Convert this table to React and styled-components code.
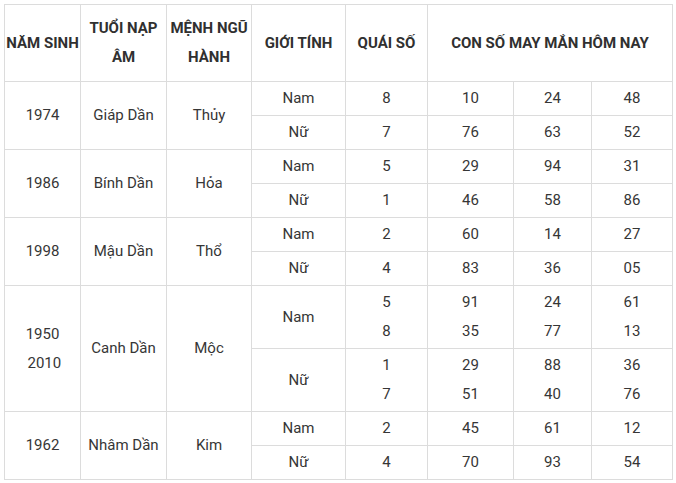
import React from "react";
import styled, { createGlobalStyle } from "styled-components";

const Global = createGlobalStyle`
  html, body { margin: 0; padding: 0; background: #fff; }
  body { font-family: Roboto, "Noto Sans", Arial, sans-serif; }
`;

const Wrap = styled.div`
  padding: 4px 0 0 4px;
`;

const Table = styled.table`
  border-collapse: collapse;
  table-layout: fixed;
  width: 668px;
  font-family: Roboto, "Noto Sans", Arial, sans-serif;
  font-size: 15px;
  line-height: 29px;
  color: #363636;
`;

const Th = styled.th`
  border: 1px solid #dcdcdc;
  padding: 0;
  height: 76px;
  font-weight: 700;
  color: #303030;
  text-align: center;
  vertical-align: middle;
  white-space: ${(p) => (p.$nowrap ? "nowrap" : "normal")};
`;

const Td = styled.td`
  border: 1px solid #dcdcdc;
  padding: 0;
  height: ${(p) => p.$h || 33}px;
  text-align: center;
  vertical-align: middle;
  font-weight: 400;
`;

const Line = styled.div`
  line-height: 29px;
`;

const widths = [76, 86, 85, 94, 82, 86, 78, 81];

const groups = [
  {
    year: ["1974"],
    tuoi: "Giáp Dần",
    menh: "Thủy",
    rows: [
      { g: "Nam", q: ["8"], n: [["10"], ["24"], ["48"]] },
      { g: "Nữ", q: ["7"], n: [["76"], ["63"], ["52"]] },
    ],
  },
  {
    year: ["1986"],
    tuoi: "Bính Dần",
    menh: "Hỏa",
    rows: [
      { g: "Nam", q: ["5"], n: [["29"], ["94"], ["31"]] },
      { g: "Nữ", q: ["1"], n: [["46"], ["58"], ["86"]] },
    ],
  },
  {
    year: ["1998"],
    tuoi: "Mậu Dần",
    menh: "Thổ",
    rows: [
      { g: "Nam", q: ["2"], n: [["60"], ["14"], ["27"]] },
      { g: "Nữ", q: ["4"], n: [["83"], ["36"], ["05"]] },
    ],
  },
  {
    year: ["1950", "\u00a02010"],
    tuoi: "Canh Dần",
    menh: "Mộc",
    h: 62,
    rows: [
      { g: "Nam", q: ["5", "8"], n: [["91", "35"], ["24", "77"], ["61", "13"]] },
      { g: "Nữ", q: ["1", "7"], n: [["29", "51"], ["88", "40"], ["36", "76"]] },
    ],
  },
  {
    year: ["1962"],
    tuoi: "Nhâm Dần",
    menh: "Kim",
    rows: [
      { g: "Nam", q: ["2"], n: [["45"], ["61"], ["12"]] },
      { g: "Nữ", q: ["4"], n: [["70"], ["93"], ["54"]] },
    ],
  },
];

const Lines = ({ items }) =>
  items.map((t, i) => <Line key={i}>{t}</Line>);

export default function App() {
  return (
    <>
      <Global />
      <Wrap>
        <Table>
          <colgroup>
            {widths.map((w, i) => (
              <col key={i} style={{ width: w }} />
            ))}
          </colgroup>
          <thead>
            <tr>
              <Th $nowrap>NĂM SINH</Th>
              <Th>TUỔI NẠP ÂM</Th>
              <Th>MỆNH NGŨ HÀNH</Th>
              <Th>GIỚI TÍNH</Th>
              <Th>QUÁI SỐ</Th>
              <Th colSpan={3}>CON SỐ MAY MẮN HÔM NAY</Th>
            </tr>
          </thead>
          <tbody>
            {groups.map((grp, gi) =>
              grp.rows.map((r, ri) => (
                <tr key={`${gi}-${ri}`}>
                  {ri === 0 && (
                    <>
                      <Td rowSpan={2}>
                        <Lines items={grp.year} />
                      </Td>
                      <Td rowSpan={2}>{grp.tuoi}</Td>
                      <Td rowSpan={2}>{grp.menh}</Td>
                    </>
                  )}
                  <Td $h={grp.h}>{r.g}</Td>
                  <Td $h={grp.h}>
                    <Lines items={r.q} />
                  </Td>
                  {r.n.map((c, ci) => (
                    <Td key={ci} $h={grp.h}>
                      <Lines items={c} />
                    </Td>
                  ))}
                </tr>
              ))
            )}
          </tbody>
        </Table>
      </Wrap>
    </>
  );
}
